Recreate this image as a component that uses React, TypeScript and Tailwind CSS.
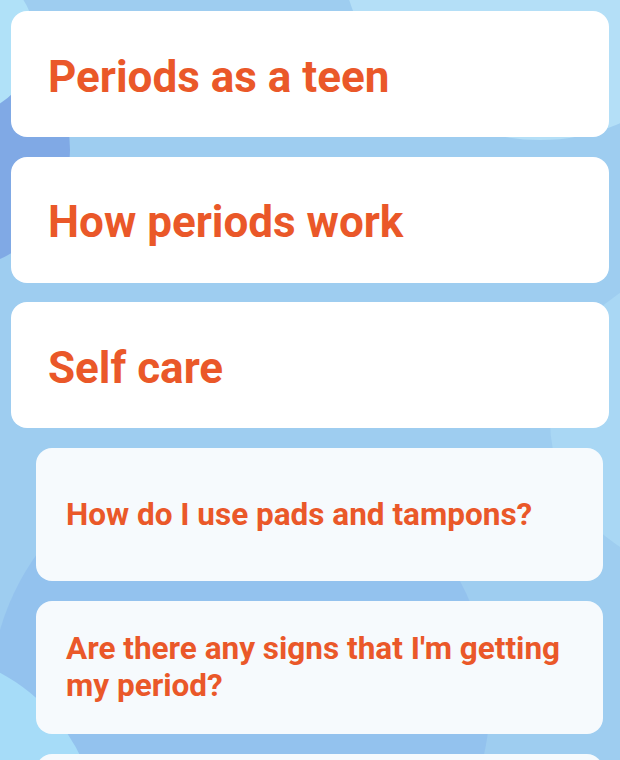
const topics = ['Periods as a teen', 'How periods work', 'Self care'];

// last card only peeks in at the bottom edge, its text is below the fold
const questions = [
  'How do I use pads and tampons?',
  "Are there any signs that I'm getting my period?",
  '',
];

const Backdrop = () => (
  <svg
    className="absolute inset-0 h-full w-full"
    viewBox="0 0 620 760"
    preserveAspectRatio="none"
  >
    <rect width="620" height="760" fill="#9ecdf0" />
    <circle cx="540" cy="-60" r="200" fill="#b4dff7" />
    <circle cx="700" cy="420" r="150" fill="#a9d7f4" />
    <circle cx="-50" cy="150" r="120" fill="#80a9e5" />
    <circle cx="-40" cy="40" r="75" fill="#b0e1f8" />
    <circle cx="240" cy="700" r="250" fill="#8cbbed" opacity="0.6" />
    <circle cx="-90" cy="840" r="190" fill="#a6dcf8" />
  </svg>
);

export default function App() {
  return (
    <div className="relative h-[760px] w-[620px] overflow-hidden font-['Roboto','Liberation_Sans',sans-serif]">
      <Backdrop />
      <div className="relative flex flex-col gap-[19.5px] px-[11px] pt-[11px]">
        {topics.map((t) => (
          <div
            key={t}
            className="flex h-[126px] items-center rounded-2xl bg-white pl-[37px] pt-[5px]"
          >
            <h2 className="text-[44px] font-bold leading-none text-[#ea5829]">
              {t}
            </h2>
          </div>
        ))}
        <div className="flex flex-col gap-[19.5px] pl-[25px] pr-[6px]">
          {questions.map((q, i) => (
            <div
              key={i}
              className="flex h-[133.5px] items-center rounded-2xl bg-[#f6fafd] pl-[30px] pr-6"
            >
              {q && (
                <p className="text-[31.5px] font-bold leading-[37px] text-[#ea5829]">
                  {q}
                </p>
              )}
            </div>
          ))}
        </div>
      </div>
    </div>
  );
}
